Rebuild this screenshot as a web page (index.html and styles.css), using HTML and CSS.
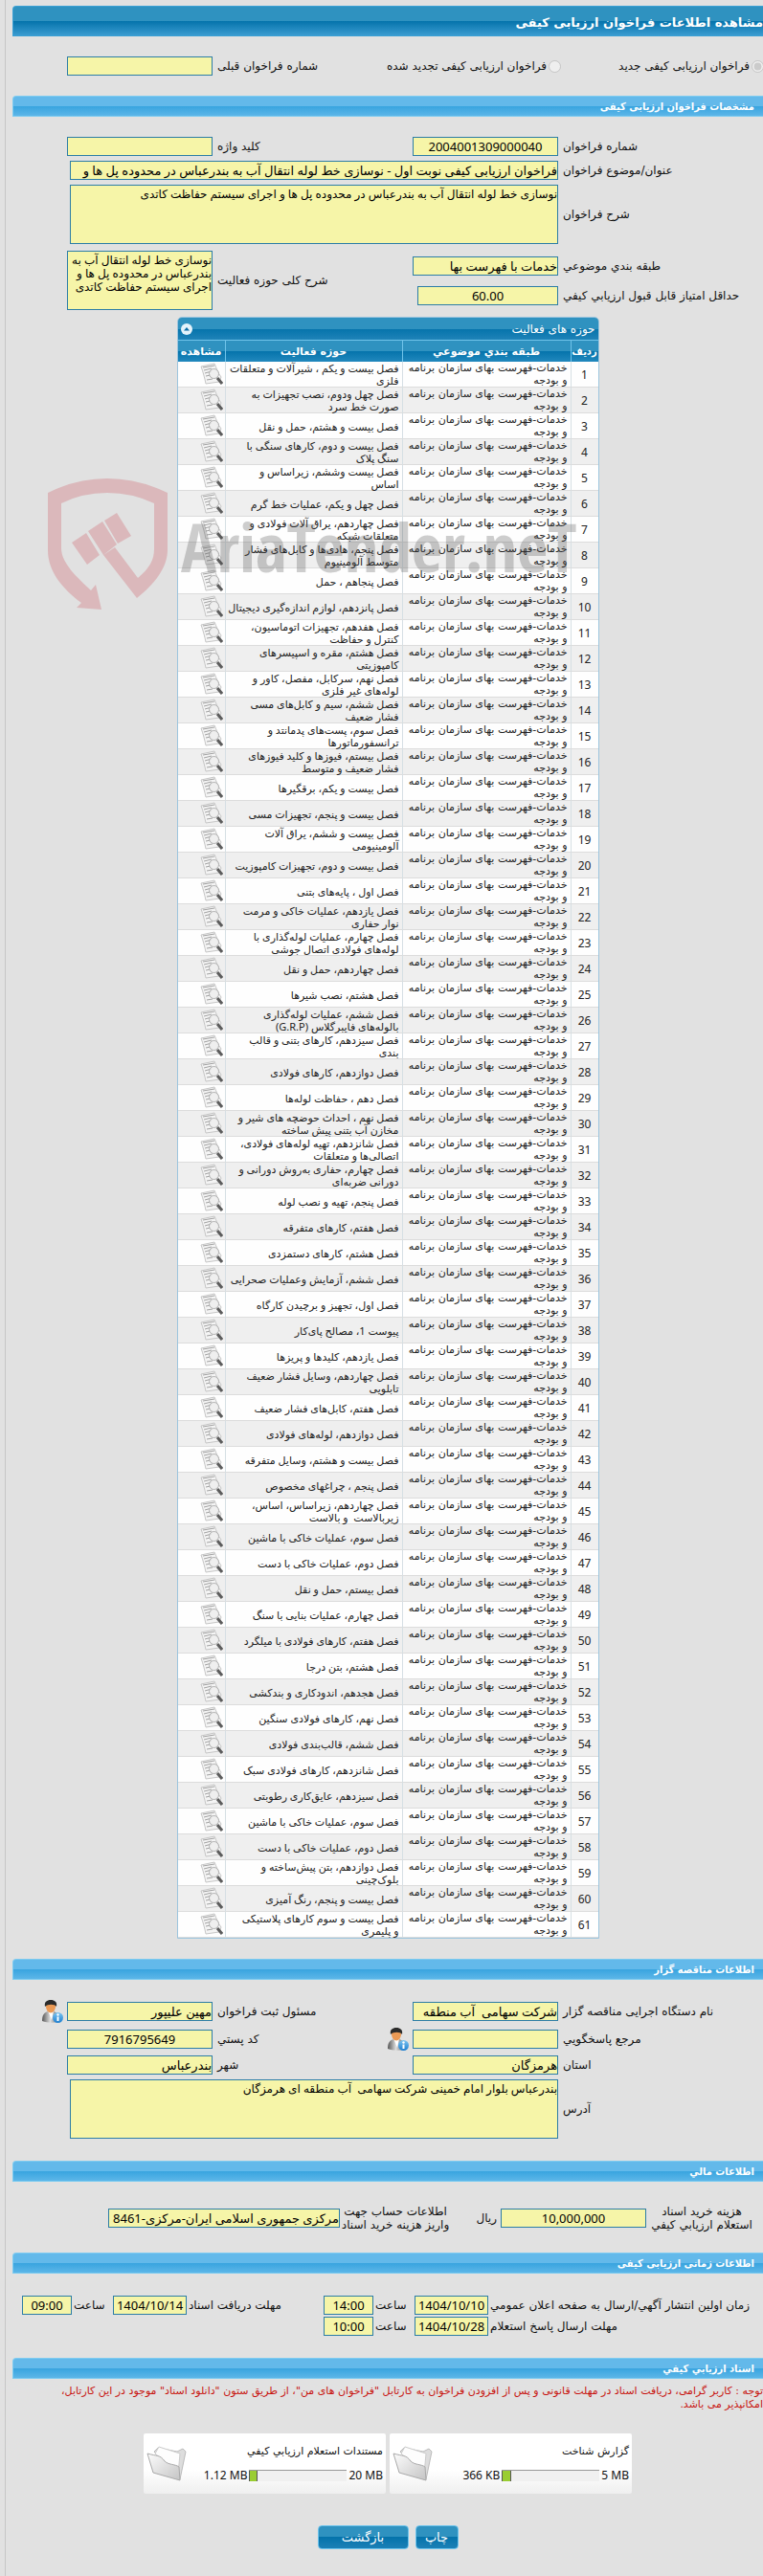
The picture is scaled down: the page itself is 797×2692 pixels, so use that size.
FILE: index.html
```html
<!DOCTYPE html>
<html lang="fa" dir="rtl">
<head>
<meta charset="utf-8">
<title>مشاهده اطلاعات فراخوان ارزیابی کیفی</title>
<link rel="stylesheet" href="styles.css">
</head>
<body>
<svg class="defs" aria-hidden="true">
  <defs>
    <linearGradient id="suit" x1="0" x2="1"><stop offset="0" stop-color="#555"/><stop offset=".5" stop-color="#ddd"/><stop offset="1" stop-color="#666"/></linearGradient>
    <linearGradient id="blue" x1="0" y1="0" x2="0" y2="1"><stop offset="0" stop-color="#7cc4f0"/><stop offset="1" stop-color="#1f7fd0"/></linearGradient>
    <linearGradient id="paper" x1="0" y1="0" x2="1" y2="1"><stop offset="0" stop-color="#fdfdfd"/><stop offset="1" stop-color="#c4c4c4"/></linearGradient>
    <symbol id="doc" viewBox="0 0 24 24">
      <path d="M1 4 15 1c2 4 3 9 7 14l-2 5-14 2C5 17 3 9 1 4z" fill="#f4f4f4" stroke="#c6c6c6"/>
      <path d="M3 5l12-2M4 8l8-2M5 11l7-2M6 14l5-1M7 18l6-1" stroke="#a2a2a2" fill="none"/>
      <circle cx="14.500" cy="11.500" r="5" fill="#eee" fill-opacity=".8" stroke="#b0b0b0"/>
      <path d="M18 16l5 6" stroke="#5c5c5c" stroke-width="3"/>
    </symbol>
    <symbol id="person" viewBox="0 0 22 24">
      <path d="M0 22c0-6 2-9 6-10h6c4 1 5 4 5 11-6 1-12 1-17-1z" fill="url(#suit)"/>
      <path d="M6 11h6l-2 10z" fill="#fff"/>
      <ellipse cx="9" cy="7" rx="5" ry="6.500" fill="#eb9a55"/>
      <path d="M3 7C2 2 5 0 9 0s7 2 6 7c-2-3-9-3-12 0z" fill="#2b2b2b"/>
      <circle cx="16.500" cy="18.500" r="5.500" fill="url(#blue)"/>
      <path d="M16.500 17.500v4.500" stroke="#fff" stroke-width="2"/><circle cx="16.500" cy="15.500" r="1.200" fill="#fff"/>
    </symbol>
    <symbol id="folder" viewBox="0 0 42 37">
      <path d="M8 6 12 2l20 4 6-3 3 3-6 29z" fill="#ddd" stroke="#bbb"/>
      <path d="M9 8 13 1l22 7-2 22z" fill="#fdfdfd" stroke="#ccc"/>
      <path d="M1 8c10 3 13 1 18 8 4 4 11 3 15 6l1 14L7 28z" fill="url(#paper)" stroke="#a9a9a9"/>
    </symbol>
  </defs>
</svg>
<main class="page">
  <h1 class="title">مشاهده اطلاعات فراخوان ارزیابی کیفی</h1>

  <div class="kind">
    <label class="choice"><input type="radio" name="kind" checked disabled>فراخوان ارزیابی کیفی جدید</label>
    <label class="choice"><input type="radio" name="kind" disabled>فراخوان ارزیابی کیفی تجدید شده</label>
    <label class="lbl prev" for="prev">شماره فراخوان قبلی</label>
    <input class="f" id="prev" readonly>
  </div>

  <h2 class="bar">مشخصات فراخوان ارزیابی کیفی</h2>
  <section class="form spec">
    <label class="lbl" for="no">شماره فراخوان</label><input class="f num" id="no" value="2004001309000040" readonly>
    <label class="lbl" for="key">کلید واژه</label><input class="f" id="key" readonly>
    <label class="lbl" for="subj">عنوان/موضوع فراخوان</label><input class="f wide" id="subj" value="فراخوان ارزیابی کیفی نوبت اول - نوسازی خط لوله انتقال آب به بندرعباس در محدوده پل ها و" readonly>
    <label class="lbl" for="desc">شرح فراخوان</label><textarea class="f wide" id="desc" readonly>نوسازی خط لوله انتقال آب به بندرعباس در محدوده پل ها و اجرای سیستم حفاظت کاتدی</textarea>
  </section>
  <section class="form scope">
    <label class="lbl" for="cat">طبقه بندي موضوعي</label><input class="f" id="cat" value="خدمات با فهرست بها" readonly>
    <label class="lbl tall" for="area">شرح کلی حوزه فعالیت</label><textarea class="f tall" id="area" readonly>نوسازی خط لوله انتقال آب به بندرعباس در محدوده پل ها و اجرای سیستم حفاظت کاتدی</textarea>
    <label class="lbl" for="min">حداقل امتیاز قابل قبول ارزيابي کيفي</label><input class="f num short" id="min" value="60.00" readonly>
  </section>

  <section class="panel">
    <header class="panel-head">
      <span>حوزه های فعالیت</span>
      <button class="fold" type="button" aria-label="جمع کردن"><svg viewBox="0 0 12 12"><path d="M3 7.500 6 4l3 3.500z" fill="#0a6ca6"/></svg></button>
    </header>
    <table class="grid">
      <colgroup><col class="c-no"><col class="c-cat"><col class="c-act"><col class="c-view"></colgroup>
      <thead><tr><th>ردیف</th><th>طبقه بندي موضوعي</th><th>حوزه فعالیت</th><th>مشاهده</th></tr></thead>
      <tbody id="rows"></tbody>
    </table>
  </section>

  <h2 class="bar">اطلاعات مناقصه گزار</h2>
  <section class="form owner">
    <label class="lbl" for="org">نام دستگاه اجرایی مناقصه گزار</label><input class="f" id="org" value="شرکت سهامی  آب منطقه" readonly>
    <label class="lbl" for="reg">مسئول ثبت فراخوان</label><span class="with-icon"><input class="f" id="reg" value="مهین علیپور" readonly><svg class="person"><use href="#person"/></svg></span>
    <label class="lbl" for="ref">مرجع پاسخگويي</label><span class="with-icon"><input class="f" id="ref" readonly><svg class="person"><use href="#person"/></svg></span>
    <label class="lbl" for="zip">کد پستي</label><input class="f num" id="zip" value="7916795649" readonly>
    <label class="lbl" for="prov">استان</label><input class="f" id="prov" value="هرمزگان" readonly>
    <label class="lbl" for="city">شهر</label><input class="f" id="city" value="بندرعباس" readonly>
    <label class="lbl" for="addr">آدرس</label><textarea class="f wide" id="addr" readonly>بندرعباس بلوار امام خمینی شرکت سهامی  آب منطقه ای هرمزگان</textarea>
  </section>

  <h2 class="bar">اطلاعات مالي</h2>
  <section class="money">
    <label for="fee">هزینه خرید اسناد<br>استعلام ارزيابي کيفي</label><input class="f num" id="fee" value="10,000,000" readonly>
    <span class="unit">ریال</span>
    <label for="acc">اطلاعات حساب جهت<br>واریز هزینه خرید اسناد</label><input class="f" id="acc" value="مرکزی جمهوری اسلامی ایران-مرکزی-8461" readonly>
  </section>

  <h2 class="bar">اطلاعات زمانی ارزیابی کیفی</h2>
  <section class="times">
    <label for="d1">زمان اولین انتشار آگهي/ارسال به صفحه اعلان عمومي</label><input class="f num" id="d1" value="1404/10/10" readonly>
    <label for="t1">ساعت</label><input class="f num" id="t1" value="14:00" readonly>
    <label for="d2">مهلت دریافت اسناد</label><input class="f num" id="d2" value="1404/10/14" readonly>
    <label for="t2">ساعت</label><input class="f num" id="t2" value="09:00" readonly>
    <label for="d3">مهلت ارسال پاسخ استعلام</label><input class="f num" id="d3" value="1404/10/28" readonly>
    <label for="t3">ساعت</label><input class="f num" id="t3" value="10:00" readonly>
  </section>

  <h2 class="bar">اسناد ارزيابي کيفي</h2>
  <p class="note">توجه : کاربر گرامی، دریافت اسناد در مهلت قانونی و پس از افزودن فراخوان به کارتابل "فراخوان های من"، از طریق ستون "دانلود اسناد" موجود در این کارتابل، امکانپذیر می باشد.</p>
  <section class="cards">
    <article class="card">
      <div class="info"><span>گزارش شناخت</span><div class="usage"><span dir="ltr">5 MB</span><span class="meter"><i style="width:9%"></i></span><span dir="ltr">366 KB</span></div></div>
      <svg class="folder"><use href="#folder"/></svg>
    </article>
    <article class="card">
      <div class="info"><span>مستندات استعلام ارزيابي کيفي</span><div class="usage"><span dir="ltr">20 MB</span><span class="meter"><i style="width:8%"></i></span><span dir="ltr">1.12 MB</span></div></div>
      <svg class="folder"><use href="#folder"/></svg>
    </article>
  </section>
  <div class="actions"><button class="btn" type="button">چاپ</button><button class="btn back" type="button">بازگشت</button></div>

  <div class="mark" aria-hidden="true" dir="ltr">
    <svg class="shield" viewBox="0 0 125 137">
      <path d="M0 15Q30 0 62 0t63 15v60c0 18-14 36-32 50L58 80l12-8 24 32c12-10 17-19 17-30V26Q88 15 62 15T14 26v47c0 15 16 30 31 44l5-6 6 26-26-2 5-5C15 115 0 97 0 75z"/>
      <path d="M25 67 40 57 54 80 41 90zM42 55l15-10 15 24-14 11zM59 44 72 36 87 60 73 68z"/>
    </svg>
    <span class="mark-text">AriaTender.neT</span>
  </div>
</main>
<script src="rows.js"></script>
</body>
</html>
```
FILE: rows.js
```js
const category = 'خدمات-فهرست بهای سازمان برنامه و بودجه';
const activities = [
  'فصل بیست و یکم ، شیرآلات و متعلقات فلزی',
  'فصل چهل ودوم، نصب تجهیزات به صورت خط سرد',
  'فصل بیست و هشتم، حمل و نقل',
  'فصل بیست و دوم، کارهای سنگی با سنگ پلاک',
  'فصل بیست وششم، زیراساس و<br>اساس',
  'فصل چهل و یکم، عملیات خط گرم',
  'فصل چهاردهم، یراق آلات فولادی و متعلقات شبکه',
  'فصل پنجم، هادی‌ها و کابل‌های فشار متوسط آلومینیوم',
  'فصل پنجاهم ، حمل',
  'فصل پانزدهم، لوازم اندازه‌گیری دیجیتال',
  'فصل هفدهم، تجهیزات اتوماسیون، کنترل و حفاظت',
  'فصل هشتم، مقره و اسپیسرهای کامپوزیتی',
  'فصل نهم، سرکابل، مفصل، کاور و لوله‌های غیر فلزی',
  'فصل ششم، سیم و کابل‌های مسی فشار ضعیف',
  'فصل سوم، پست‌های پدمانتد و ترانسفورماتورها',
  'فصل بیستم، فیوزها و کلید فیوزهای فشار ضعیف و متوسط',
  'فصل بیست و یکم، برقگیرها',
  'فصل بیست و پنجم، تجهیزات مسی',
  'فصل بیست و ششم، یراق آلات آلومینیومی',
  'فصل بیست و دوم، تجهیزات کامپوزیت',
  'فصل اول ، پایه‌های بتنی',
  'فصل یازدهم، عملیات خاکی و مرمت نوار حفاری',
  'فصل چهارم، عملیات لوله‌گذاری با لوله‌های فولادی اتصال جوشی',
  'فصل چهاردهم، حمل و نقل',
  'فصل هشتم، نصب شیرها',
  'فصل ششم، عملیات لوله‌گذاری بالوله‌های فایبرگلاس (G.R.P)',
  'فصل سیزدهم، کارهای بتنی و قالب<br>بندی',
  'فصل دوازدهم، کارهای فولادی',
  'فصل دهم ، حفاظت لوله‌ها',
  'فصل نهم ، احداث حوضچه های شیر و مخازن آب بتنی پیش ساخته',
  'فصل شانزدهم، تهیه لوله‌های فولادی، اتصالی‌ها و متعلقات',
  'فصل چهارم، حفاری به‌روش دورانی و دورانی ضربه‌ای',
  'فصل پنجم، تهیه و نصب لوله',
  'فصل هفتم، کارهای متفرقه',
  'فصل هشتم، کارهای دستمزدی',
  'فصل ششم، آزمایش وعملیات صحرایی',
  'فصل اول، تجهیز و برچیدن کارگاه',
  'پیوست 1، مصالح پای‌کار',
  'فصل یازدهم، کلیدها و پریزها',
  'فصل چهاردهم، وسایل فشار ضعیف تابلویی',
  'فصل هفتم، کابل‌های فشار ضعیف',
  'فصل دوازدهم، لوله‌های فولادی',
  'فصل بیست و هشتم، وسایل متفرقه',
  'فصل پنجم ، چراغهای مخصوص',
  'فصل چهاردهم، زیراساس، اساس، زیربالاست \u00a0و بالاست',
  'فصل سوم، عملیات خاکی با ماشین',
  'فصل دوم، عملیات خاکی با دست',
  'فصل بیستم، حمل و نقل',
  'فصل چهارم، عملیات بنایی با سنگ',
  'فصل هفتم، کارهای فولادی با میلگرد',
  'فصل هشتم، بتن درجا',
  'فصل هجدهم، اندودکاری و بندکشی',
  'فصل نهم، کارهای فولادی سنگین',
  'فصل ششم، قالب‌بندی فولادی',
  'فصل شانزدهم، کارهای فولادی سبک',
  'فصل سیزدهم، عایق‌کاری رطوبتی',
  'فصل سوم، عملیات خاکی با ماشین',
  'فصل دوم، عملیات خاکی با دست',
  'فصل دوازدهم، بتن پیش‌ساخته و بلوک‌چینی',
  'فصل بیست و پنجم، رنگ آمیزی',
  'فصل بیست و سوم کارهای پلاستیکی و\u00a0پلیمری'
];
document.getElementById('rows').innerHTML = activities.map((name, i) =>
  `<tr><td>${i + 1}</td><td>${category}</td><td class="act">${name}</td><td><button class="view" type="button" aria-label="مشاهده"><svg viewBox="0 0 24 24"><use href="#doc"/></svg></button></td></tr>`
).join('');
```
FILE: styles.css
```css
* { box-sizing: border-box; }
body {
  margin: 0;
  background: #e1e1e1;
  color: #111;
  font: 12px/14px "DejaVu Sans", sans-serif;
}
h1, h2, p { margin: 0; }
button, input, textarea { font: inherit; margin: 0; }
.defs { position: absolute; width: 0; height: 0; }

.page {
  position: relative;
  margin-left: 5px;
  border-left: 1px solid #c6c6c6;
  padding: 6px 0 28px 7px;
  overflow: hidden;
}
.title {
  height: 32px;
  border: 1px solid #3aa0d4;
  border-right: 0;
  border-radius: 4px 0 0 0;
  background: linear-gradient(#2f92c0 0 50%, #0473ab 50%, #3a9bd0);
  color: #fff;
  font-size: 13px;
  line-height: 34px;
}
.bar {
  height: 22px;
  padding-right: 9px;
  border: 1px solid #7dcbf0;
  border-right: 0;
  border-radius: 4px 0 0 0;
  background: linear-gradient(#63b9ea 0 50%, #38a4df 50%, #5cb6e8);
  color: #fff;
  font: bold 11px/21px "DejaVu Sans Condensed", "DejaVu Sans", sans-serif;
}

.f {
  display: block;
  width: 152px;
  height: 20px;
  padding: 0;
  border: 1px solid #2c7da6;
  border-radius: 0;
  background: #f6f5a8;
  color: #000;
  font: 13px/18px "Noto Sans", "DejaVu Sans", sans-serif;
  outline: 0;
}
.num { text-align: center; }
textarea.f {
  height: 62px;
  resize: none;
  overflow: hidden;
  font: 12px/14px "Noto Sans", "DejaVu Sans", sans-serif;
  padding-top: 2px;
}
.f.wide { width: auto; }
.f.short { width: 147px; }

.kind {
  display: flex;
  align-items: center;
  padding: 21px 0 21px 57px;
}
.choice { display: flex; align-items: center; gap: 2px; margin-left: 60px; white-space: nowrap; }
.choice input { width: 13px; height: 13px; }
.choice:first-child { margin-right: -1px; }
.kind .prev { margin: 0 auto 0 0; }

.lbl { text-align: left; padding-left: 5px; white-space: nowrap; }
.form {
  display: grid;
  grid-template-columns: 214px 182px 1fr 152px;
  align-items: center;
  row-gap: 5px;
  padding-left: 57px;
}
.spec { padding-top: 21px; }
.form .wide { grid-column: 2 / 5; margin-left: 3px; }
.scope { padding-top: 7px; padding-bottom: 7px; grid-template-rows: 31px 31px; row-gap: 0; }
.tall { grid-row: 1 / 3; }
label.tall { grid-column: 3; }
textarea.tall { grid-column: 4; }
.owner { padding-top: 21px; padding-bottom: 23px; }
.with-icon { display: flex; align-items: center; gap: 4px; }
.with-icon .f { flex: none; }
.person { flex: none; width: 22px; height: 24px; }

.panel {
  width: 441px;
  max-width: 100%;
  margin: 0 auto 21px;
  border: 1px solid #9cc5de;
  border-radius: 5px 5px 0 0;
  overflow: hidden;
}
.panel-head {
  display: flex;
  align-items: center;
  justify-content: space-between;
  height: 23px;
  padding: 0 3px;
  background: linear-gradient(#2f92c0 0 50%, #0473ab 50%, #1f83b8);
  color: #fff;
}
.fold { width: 12px; height: 12px; padding: 0; border: 0; border-radius: 50%; background: #e4f3fb; }
.fold svg { display: block; width: 12px; height: 12px; }
.grid { width: 100%; border-collapse: separate; border-spacing: 0; table-layout: fixed; }
.c-no { width: 29px; }
.c-cat { width: 176px; }
.c-act { width: 185px; }
.grid th {
  height: 23px;
  padding: 0;
  border-left: 1px solid #6fc3ea;
  border-top: 1px solid #6fc3ea;
  background: linear-gradient(#2f92c0 0 50%, #0473ab 50%, #2188bd);
  color: #fff;
  font: bold 11px/13px "DejaVu Sans", sans-serif;
  white-space: nowrap;
}
.grid th:first-child { font-family: "DejaVu Sans Condensed", "DejaVu Sans", sans-serif; }
.grid td {
  height: 27px;
  padding: 0 3px;
  border-bottom: 1px solid #dcdcdc;
  border-left: 1px solid #d6dfe4;
  background: #fefefe;
  color: #222;
  font-size: 11px;
  line-height: 13px;
}
.grid tr:nth-child(even) td { background: #efefef; }
.grid td:first-child { padding: 0; text-align: center; font-family: "Noto Sans", sans-serif; font-size: 12px; }
.grid .act { padding-left: 0; font-family: "Noto Sans", "DejaVu Sans", sans-serif; }
.grid th:last-child, .grid td:last-child { border-left: 0; }
.grid td:last-child { padding: 0 2px; }
.view { display: block; width: 24px; height: 24px; padding: 0; border: 0; background: none; }
.view svg { display: block; width: 24px; height: 24px; }

.money {
  display: flex;
  align-items: center;
  padding: 24px 6px 22px 100px;
}
.money label { width: 116px; text-align: center; white-space: nowrap; }
.money .f { flex: none; }
.money #acc { width: 242px; }
.money .unit { margin: 0 4px 0 auto; }

.times {
  display: grid;
  grid-template-columns: 285px 77px 39px 52px 1fr 77px 39px 52px;
  gap: 2px;
  align-items: center;
  padding: 23px 0 23px 10px;
}
.times label { text-align: left; white-space: nowrap; }
.times .f { width: auto; min-width: 0; }
.times label[for="d3"] { grid-column: 1; }

.note { padding: 6px 0 0 16px; color: #c8140f; font-size: 11px; }
.cards { display: flex; justify-content: center; gap: 4px; padding-top: 23px; }
.card {
  display: flex;
  align-items: center;
  width: 253px;
  height: 63px;
  padding: 0 3px;
  border-radius: 2px;
  background: linear-gradient(#fff 60%, #efefef);
  font-size: 11px;
}
.info { flex: 1; display: flex; flex-direction: column; gap: 11px; }
.usage { display: flex; align-items: center; gap: 2px; font: 12px/14px "Noto Sans", sans-serif; }
.meter {
  display: flex;
  flex-direction: row-reverse;
  width: 102px;
  height: 12px;
  border-top: 1px solid #999;
  background: #f0f0f0;
}
.meter i { background: #9acd32; border: solid #555; border-width: 0 1px; }
.folder { width: 42px; height: 37px; }
.actions { display: flex; justify-content: center; gap: 7px; padding-top: 33px; }
.btn {
  width: 45px;
  height: 25px;
  padding: 0;
  border: 1px solid #6cc3ec;
  border-radius: 4px;
  background: linear-gradient(#2f92c0 0 50%, #0473ab 50%, #1c80b6);
  color: #fff;
  font-size: 13px;
}
.back { width: 95px; }

.mark {
  position: absolute;
  top: 500px;
  left: 44px;
  display: flex;
  align-items: flex-start;
  gap: 14px;
  pointer-events: none;
}
.shield { width: 125px; height: 137px; fill: rgb(205 90 100 / .3); }
.mark-text {
  color: rgb(80 80 80 / .28);
  font: bold 70px/90px "Open Sans Condensed", "Liberation Sans", sans-serif;
  padding-top: 26px;
}
```
